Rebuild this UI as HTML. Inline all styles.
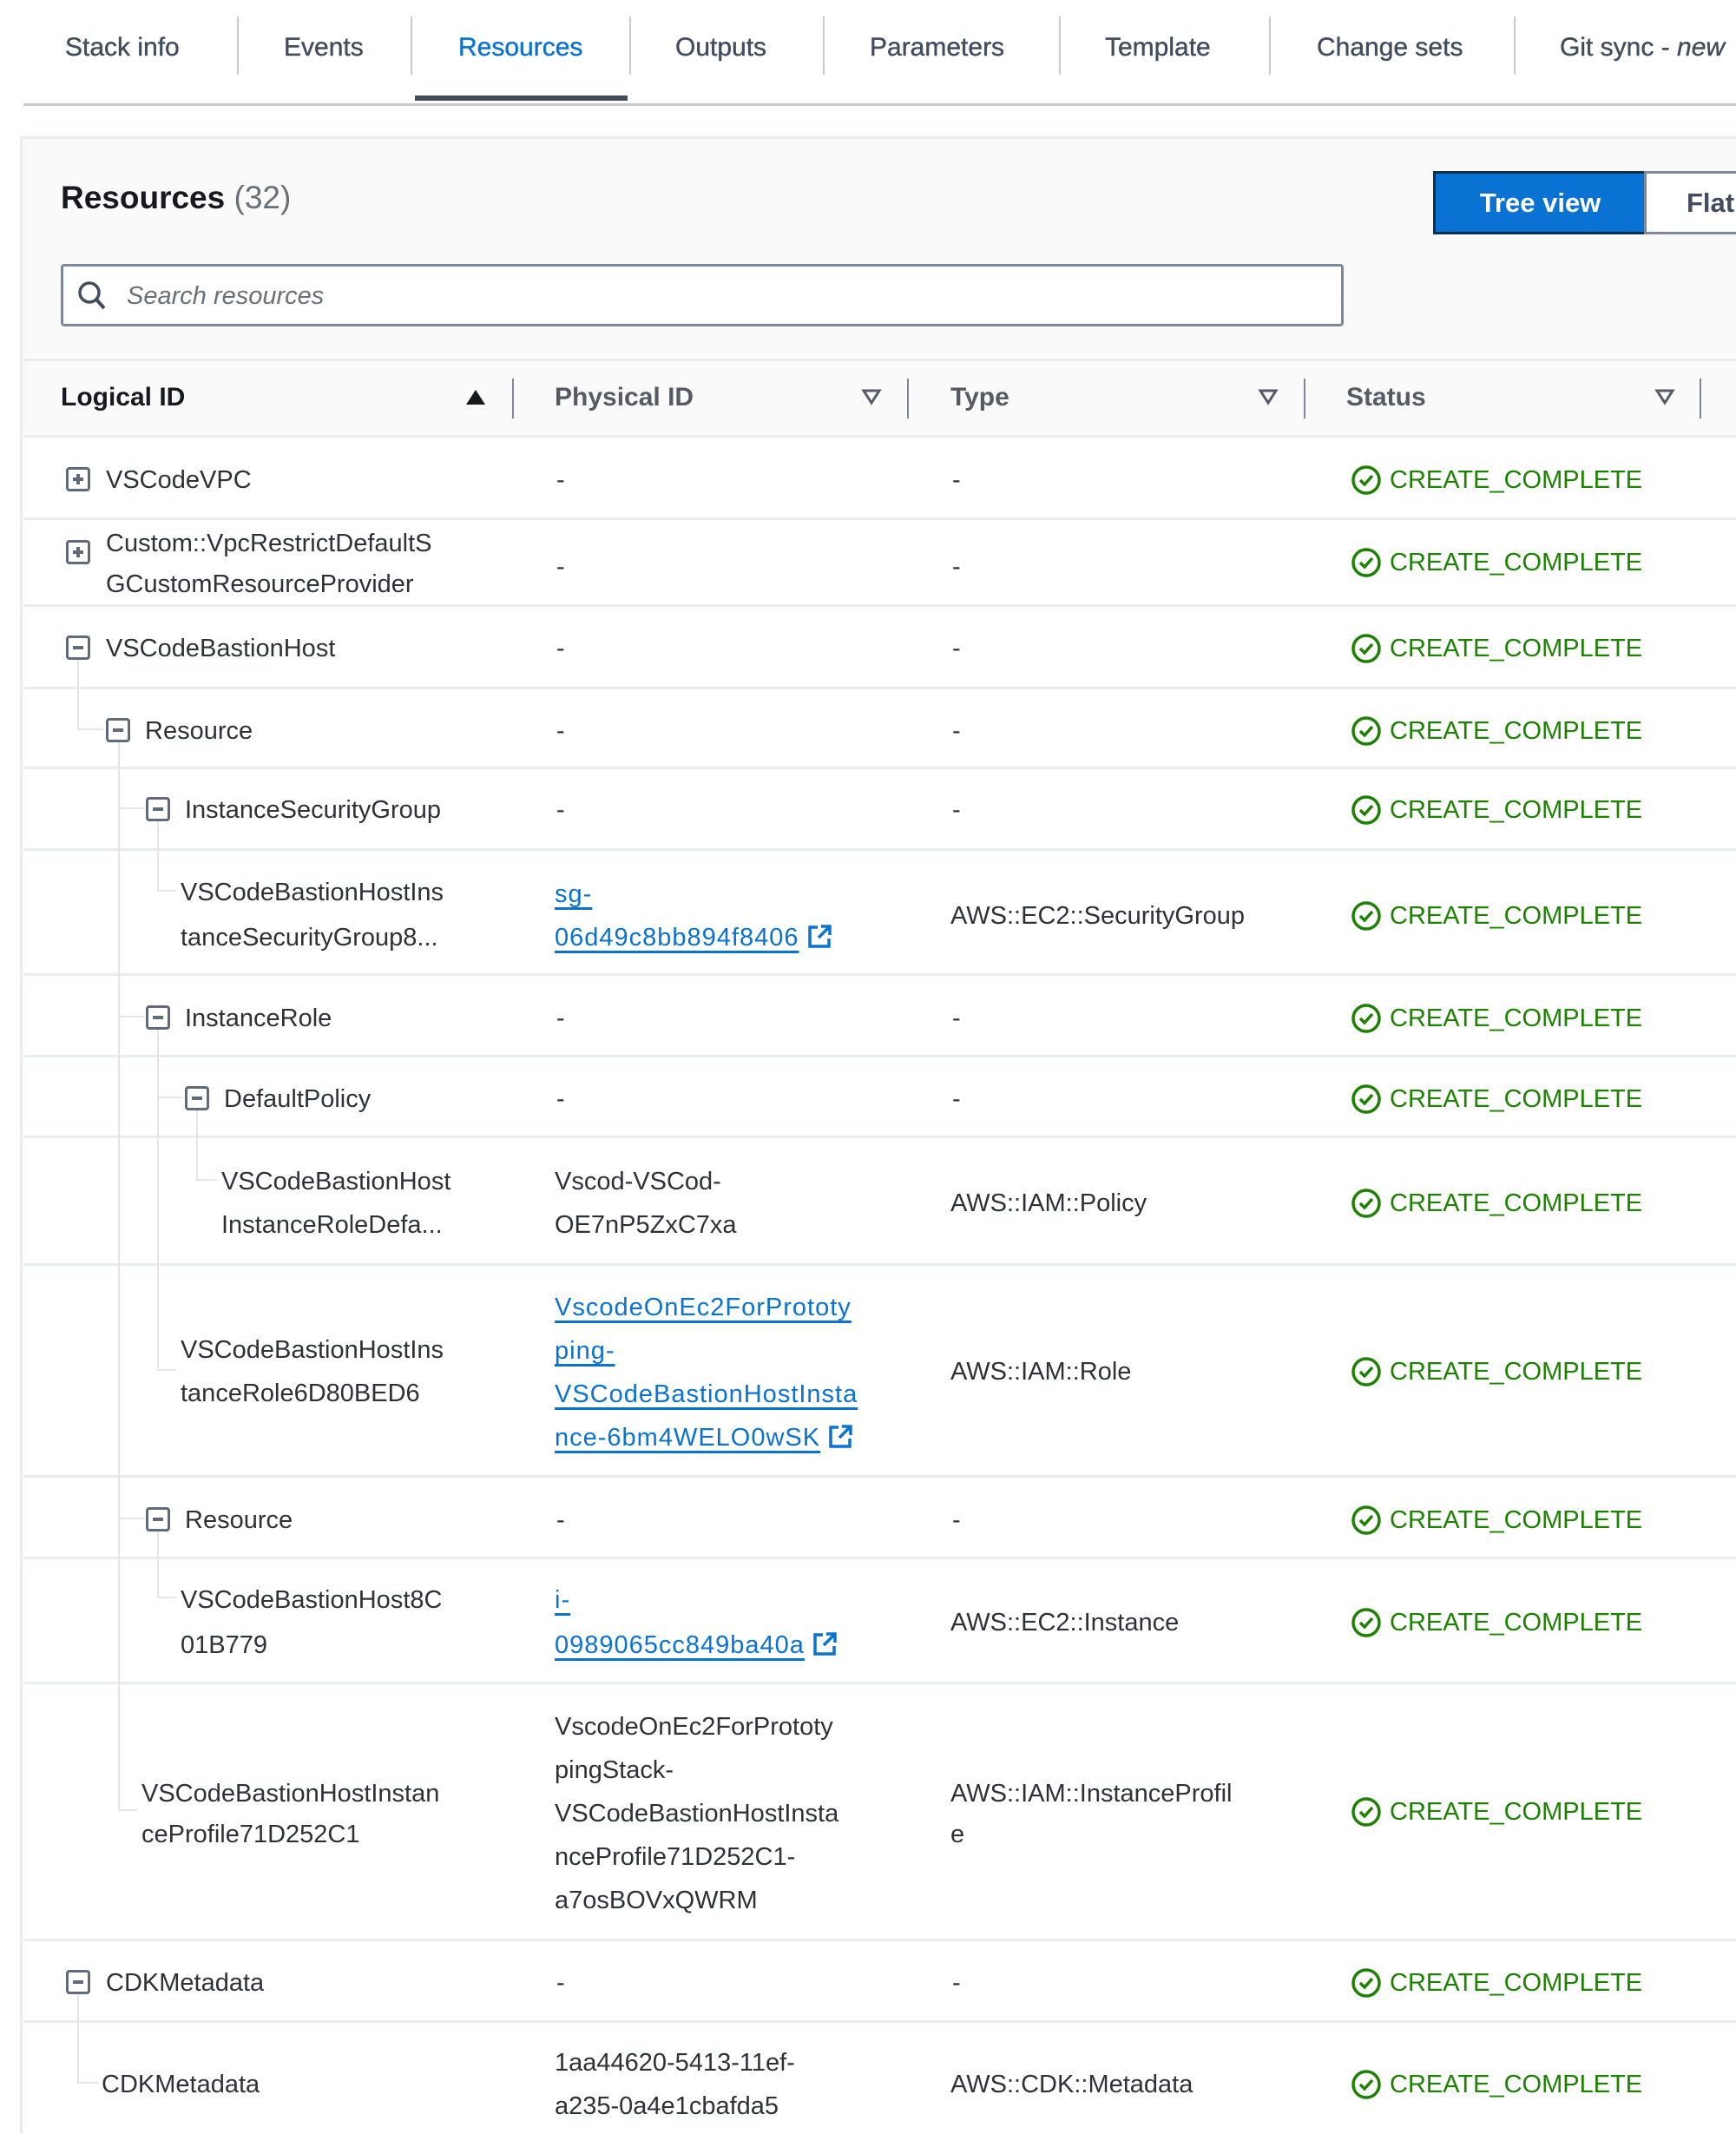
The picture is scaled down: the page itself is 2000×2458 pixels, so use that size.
<!DOCTYPE html>
<html><head><meta charset="utf-8"><style>
*{margin:0;padding:0;box-sizing:border-box}
body{width:2000px;height:2458px;overflow:hidden;background:#fff;font-family:"Liberation Sans",sans-serif;position:relative;color:#2a2e33}
.a{position:absolute}
.t{position:absolute;font-size:29px;line-height:50px;white-space:nowrap;color:#2d3238;transform:translateY(3px)}
.tab{position:absolute;top:33px;font-size:30px;line-height:44px;color:#414d5c;white-space:nowrap;-webkit-text-stroke:0.4px #414d5c}
.sep{position:absolute;top:19px;width:2px;height:67px;background:#c6cbd1}
.rb{position:absolute;left:27px;width:1973px;height:3px;background:#eaeded}
.ic{position:absolute;width:28px;height:28px;border:3px solid #5f6b7a;border-radius:4px;transform:translateY(2px)}
.ic:before{content:"";position:absolute;left:5px;top:9px;width:12px;height:4px;background:#5f6b7a}
.ic.p:after{content:"";position:absolute;left:9px;top:5px;width:4px;height:12px;background:#5f6b7a}
.st{position:absolute;left:1556px;height:50px;white-space:nowrap;font-size:29px;line-height:50px;color:#1d8102;transform:translateY(3px)}
.st svg{position:absolute;left:0;top:7px}
.st span{position:absolute;left:45px;top:0}
.lk{color:#0972d3;text-decoration:underline;text-decoration-thickness:3px;text-underline-offset:6px;letter-spacing:1px}
.vl{position:absolute;width:2px;background:#e3e6e8}
.hl{position:absolute;height:2px;background:#e3e6e8}
.h{position:absolute;top:433px;font-size:30px;line-height:50px;font-weight:bold;color:#545b64}
.hs{position:absolute;top:436px;width:2px;height:46px;background:#7d8998}
</style></head><body>
<div class="tab" style="left:75px">Stack info</div>
<div class="sep" style="left:273px"></div>
<div class="tab" style="left:327px">Events</div>
<div class="sep" style="left:473px"></div>
<div class="tab" style="left:528px;color:#0972d3;-webkit-text-stroke:0.4px #0972d3">Resources</div>
<div class="sep" style="left:725px"></div>
<div class="tab" style="left:778px">Outputs</div>
<div class="sep" style="left:948px"></div>
<div class="tab" style="left:1002px">Parameters</div>
<div class="sep" style="left:1220px"></div>
<div class="tab" style="left:1273px">Template</div>
<div class="sep" style="left:1462px"></div>
<div class="tab" style="left:1517px">Change sets</div>
<div class="sep" style="left:1744px"></div>
<div class="tab" style="left:1797px">Git sync - <i>new</i></div>
<div class="a" style="left:27px;top:119px;width:1973px;height:3px;background:#c6cbd1"></div>
<div class="a" style="left:478px;top:110px;width:245px;height:6px;background:#414d5c"></div>

<div class="a" style="left:23px;top:157px;width:1977px;height:345px;background:#fafafa;border-top:3px solid #eaeded"></div>
<div class="a" style="left:23px;top:157px;width:3px;height:2301px;background:#eaeded"></div>
<div class="a" style="left:70px;top:204px;font-size:37px;line-height:48px;font-weight:bold;color:#16191f">Resources <span style="font-weight:normal;color:#687078">(32)</span></div>
<div class="a" style="left:1651px;top:197px;width:244px;height:73px;background:#0972d3;border:3px solid #0d2f52;border-right:none;color:#fff;font-weight:bold;font-size:31px;line-height:67px;text-align:center">Tree view</div>
<div class="a" style="left:1894px;top:197px;width:120px;height:73px;background:#fff;border:3px solid #7d8998;color:#414d5c;font-weight:bold;font-size:31px;line-height:67px;padding-left:46px">Flat</div>
<div class="a" style="left:70px;top:304px;width:1478px;height:72px;background:#fff;border:3px solid #7d8998;border-radius:4px"></div>
<svg class="a" style="left:88px;top:322px" width="36" height="40" viewBox="0 0 36 40"><circle cx="15" cy="15" r="11" fill="none" stroke="#414d5c" stroke-width="3.5"/><path d="M23 23 L32 33" stroke="#414d5c" stroke-width="4"/></svg>
<div class="a" style="left:146px;top:316px;font-size:29px;line-height:50px;font-style:italic;color:#687078">Search resources</div>
<div class="a" style="left:27px;top:413px;width:1973px;height:3px;background:#eaeded"></div>

<div class="h" style="left:70px;color:#16191f">Logical ID</div>
<svg class="a" style="left:535px;top:446px" width="26" height="22"><path d="M2 20 L13 3 L24 20Z" fill="#16191f"/></svg>
<div class="hs" style="left:590px"></div>
<div class="h" style="left:639px">Physical ID</div>
<svg class="a" style="left:992px;top:447px" width="24" height="20"><path d="M3 3 L21 3 L12 17Z" fill="none" stroke="#545b64" stroke-width="3"/></svg>
<div class="hs" style="left:1045px"></div>
<div class="h" style="left:1095px">Type</div>
<svg class="a" style="left:1449px;top:447px" width="24" height="20"><path d="M3 3 L21 3 L12 17Z" fill="none" stroke="#545b64" stroke-width="3"/></svg>
<div class="hs" style="left:1502px"></div>
<div class="h" style="left:1551px">Status</div>
<svg class="a" style="left:1906px;top:447px" width="24" height="20"><path d="M3 3 L21 3 L12 17Z" fill="none" stroke="#545b64" stroke-width="3"/></svg>
<div class="hs" style="left:1958px"></div>

<div class="rb" style="top:501px"></div>
<div class="rb" style="top:596px"></div>
<div class="rb" style="top:696px"></div>
<div class="rb" style="top:791px"></div>
<div class="rb" style="top:883px"></div>
<div class="rb" style="top:977px"></div>
<div class="rb" style="top:1121px"></div>
<div class="rb" style="top:1215px"></div>
<div class="rb" style="top:1308px"></div>
<div class="rb" style="top:1455px"></div>
<div class="rb" style="top:1699px"></div>
<div class="rb" style="top:1793px"></div>
<div class="rb" style="top:1937px"></div>
<div class="rb" style="top:2233px"></div>
<div class="rb" style="top:2327px"></div>

<div class="vl" style="left:89px;top:760px;height:80px"></div>
<div class="hl" style="left:89px;top:839px;width:30px"></div>
<div class="vl" style="left:136px;top:855px;height:1230px"></div>
<div class="hl" style="left:136px;top:930px;width:30px"></div>
<div class="hl" style="left:136px;top:1170px;width:30px"></div>
<div class="hl" style="left:136px;top:1748px;width:30px"></div>
<div class="hl" style="left:136px;top:2084px;width:22px"></div>
<div class="vl" style="left:181px;top:946px;height:80px"></div>
<div class="hl" style="left:181px;top:1025px;width:22px"></div>
<div class="vl" style="left:181px;top:1186px;height:392px"></div>
<div class="hl" style="left:181px;top:1263px;width:30px"></div>
<div class="hl" style="left:181px;top:1577px;width:22px"></div>
<div class="vl" style="left:181px;top:1764px;height:76px"></div>
<div class="hl" style="left:181px;top:1839px;width:22px"></div>
<div class="vl" style="left:226px;top:1279px;height:80px"></div>
<div class="hl" style="left:226px;top:1358px;width:24px"></div>
<div class="vl" style="left:89px;top:2297px;height:102px"></div>
<div class="hl" style="left:89px;top:2398px;width:24px"></div>

<div class="ic p" style="left:76px;top:536px"></div>
<div class="t" style="left:122px;top:525px">VSCodeVPC</div>
<div class="t" style="left:641px;top:525px">-</div>
<div class="t" style="left:1097px;top:525px">-</div>
<div class="st" style="top:525px"><svg width="36" height="36"><circle cx="18" cy="18" r="15" fill="none" stroke="#1d8102" stroke-width="3.5"/><path d="M11 18 L16 23 L25 13" fill="none" stroke="#1d8102" stroke-width="3.5"/></svg><span>CREATE_COMPLETE</span></div>

<div class="ic p" style="left:76px;top:620px"></div>
<div class="t" style="left:122px;top:600px;line-height:47px">Custom::VpcRestrictDefaultS<br>GCustomResourceProvider</div>
<div class="t" style="left:641px;top:625px">-</div>
<div class="t" style="left:1097px;top:625px">-</div>
<div class="st" style="top:620px"><svg width="36" height="36"><circle cx="18" cy="18" r="15" fill="none" stroke="#1d8102" stroke-width="3.5"/><path d="M11 18 L16 23 L25 13" fill="none" stroke="#1d8102" stroke-width="3.5"/></svg><span>CREATE_COMPLETE</span></div>

<div class="ic" style="left:76px;top:730px"></div>
<div class="t" style="left:122px;top:719px">VSCodeBastionHost</div>
<div class="t" style="left:641px;top:719px">-</div>
<div class="t" style="left:1097px;top:719px">-</div>
<div class="st" style="top:719px"><svg width="36" height="36"><circle cx="18" cy="18" r="15" fill="none" stroke="#1d8102" stroke-width="3.5"/><path d="M11 18 L16 23 L25 13" fill="none" stroke="#1d8102" stroke-width="3.5"/></svg><span>CREATE_COMPLETE</span></div>

<div class="ic" style="left:122px;top:825px"></div>
<div class="t" style="left:167px;top:814px">Resource</div>
<div class="t" style="left:641px;top:814px">-</div>
<div class="t" style="left:1097px;top:814px">-</div>
<div class="st" style="top:814px"><svg width="36" height="36"><circle cx="18" cy="18" r="15" fill="none" stroke="#1d8102" stroke-width="3.5"/><path d="M11 18 L16 23 L25 13" fill="none" stroke="#1d8102" stroke-width="3.5"/></svg><span>CREATE_COMPLETE</span></div>

<div class="ic" style="left:168px;top:916px"></div>
<div class="t" style="left:213px;top:905px">InstanceSecurityGroup</div>
<div class="t" style="left:641px;top:905px">-</div>
<div class="t" style="left:1097px;top:905px">-</div>
<div class="st" style="top:905px"><svg width="36" height="36"><circle cx="18" cy="18" r="15" fill="none" stroke="#1d8102" stroke-width="3.5"/><path d="M11 18 L16 23 L25 13" fill="none" stroke="#1d8102" stroke-width="3.5"/></svg><span>CREATE_COMPLETE</span></div>

<div class="t" style="left:208px;top:999px;line-height:52px">VSCodeBastionHostIns<br>tanceSecurityGroup8...</div>
<div class="t" style="left:639px;top:1002px;line-height:50px"><span class="lk">sg-</span><br><span class="lk">06d49c8bb894f8406</span> <svg width="30" height="30" style="vertical-align:-5px"><path d="M13 4 H4 V26 H26 V17" fill="none" stroke="#0972d3" stroke-width="3.5"/><path d="M17 3 H27 V13 M27 3 L14 16" fill="none" stroke="#0972d3" stroke-width="3.5"/></svg></div>
<div class="t" style="left:1095px;top:1027px">AWS::EC2::SecurityGroup</div>
<div class="st" style="top:1027px"><svg width="36" height="36"><circle cx="18" cy="18" r="15" fill="none" stroke="#1d8102" stroke-width="3.5"/><path d="M11 18 L16 23 L25 13" fill="none" stroke="#1d8102" stroke-width="3.5"/></svg><span>CREATE_COMPLETE</span></div>

<div class="ic" style="left:168px;top:1156px"></div>
<div class="t" style="left:213px;top:1145px">InstanceRole</div>
<div class="t" style="left:641px;top:1145px">-</div>
<div class="t" style="left:1097px;top:1145px">-</div>
<div class="st" style="top:1145px"><svg width="36" height="36"><circle cx="18" cy="18" r="15" fill="none" stroke="#1d8102" stroke-width="3.5"/><path d="M11 18 L16 23 L25 13" fill="none" stroke="#1d8102" stroke-width="3.5"/></svg><span>CREATE_COMPLETE</span></div>

<div class="ic" style="left:213px;top:1249px"></div>
<div class="t" style="left:258px;top:1238px">DefaultPolicy</div>
<div class="t" style="left:641px;top:1238px">-</div>
<div class="t" style="left:1097px;top:1238px">-</div>
<div class="st" style="top:1238px"><svg width="36" height="36"><circle cx="18" cy="18" r="15" fill="none" stroke="#1d8102" stroke-width="3.5"/><path d="M11 18 L16 23 L25 13" fill="none" stroke="#1d8102" stroke-width="3.5"/></svg><span>CREATE_COMPLETE</span></div>

<div class="t" style="left:255px;top:1333px">VSCodeBastionHost<br>InstanceRoleDefa...</div>
<div class="t" style="left:639px;top:1333px">Vscod-VSCod-<br>OE7nP5ZxC7xa</div>
<div class="t" style="left:1095px;top:1358px">AWS::IAM::Policy</div>
<div class="st" style="top:1358px"><svg width="36" height="36"><circle cx="18" cy="18" r="15" fill="none" stroke="#1d8102" stroke-width="3.5"/><path d="M11 18 L16 23 L25 13" fill="none" stroke="#1d8102" stroke-width="3.5"/></svg><span>CREATE_COMPLETE</span></div>

<div class="t" style="left:208px;top:1527px">VSCodeBastionHostIns<br>tanceRole6D80BED6</div>
<div class="t" style="left:639px;top:1478px"><span class="lk">VscodeOnEc2ForPrototy</span><br><span class="lk">ping-</span><br><span class="lk">VSCodeBastionHostInsta</span><br><span class="lk">nce-6bm4WELO0wSK</span> <svg width="30" height="30" style="vertical-align:-5px"><path d="M13 4 H4 V26 H26 V17" fill="none" stroke="#0972d3" stroke-width="3.5"/><path d="M17 3 H27 V13 M27 3 L14 16" fill="none" stroke="#0972d3" stroke-width="3.5"/></svg></div>
<div class="t" style="left:1095px;top:1552px">AWS::IAM::Role</div>
<div class="st" style="top:1552px"><svg width="36" height="36"><circle cx="18" cy="18" r="15" fill="none" stroke="#1d8102" stroke-width="3.5"/><path d="M11 18 L16 23 L25 13" fill="none" stroke="#1d8102" stroke-width="3.5"/></svg><span>CREATE_COMPLETE</span></div>

<div class="ic" style="left:168px;top:1734px"></div>
<div class="t" style="left:213px;top:1723px">Resource</div>
<div class="t" style="left:641px;top:1723px">-</div>
<div class="t" style="left:1097px;top:1723px">-</div>
<div class="st" style="top:1723px"><svg width="36" height="36"><circle cx="18" cy="18" r="15" fill="none" stroke="#1d8102" stroke-width="3.5"/><path d="M11 18 L16 23 L25 13" fill="none" stroke="#1d8102" stroke-width="3.5"/></svg><span>CREATE_COMPLETE</span></div>

<div class="t" style="left:208px;top:1814px;line-height:52px">VSCodeBastionHost8C<br>01B779</div>
<div class="t" style="left:639px;top:1814px;line-height:52px"><span class="lk">i-</span><br><span class="lk">0989065cc849ba40a</span> <svg width="30" height="30" style="vertical-align:-5px"><path d="M13 4 H4 V26 H26 V17" fill="none" stroke="#0972d3" stroke-width="3.5"/><path d="M17 3 H27 V13 M27 3 L14 16" fill="none" stroke="#0972d3" stroke-width="3.5"/></svg></div>
<div class="t" style="left:1095px;top:1841px">AWS::EC2::Instance</div>
<div class="st" style="top:1841px"><svg width="36" height="36"><circle cx="18" cy="18" r="15" fill="none" stroke="#1d8102" stroke-width="3.5"/><path d="M11 18 L16 23 L25 13" fill="none" stroke="#1d8102" stroke-width="3.5"/></svg><span>CREATE_COMPLETE</span></div>

<div class="t" style="left:163px;top:2040px;line-height:47px">VSCodeBastionHostInstan<br>ceProfile71D252C1</div>
<div class="t" style="left:639px;top:1961px">VscodeOnEc2ForPrototy<br>pingStack-<br>VSCodeBastionHostInsta<br>nceProfile71D252C1-<br>a7osBOVxQWRM</div>
<div class="t" style="left:1095px;top:2040px;line-height:47px">AWS::IAM::InstanceProfil<br>e</div>
<div class="st" style="top:2059px"><svg width="36" height="36"><circle cx="18" cy="18" r="15" fill="none" stroke="#1d8102" stroke-width="3.5"/><path d="M11 18 L16 23 L25 13" fill="none" stroke="#1d8102" stroke-width="3.5"/></svg><span>CREATE_COMPLETE</span></div>

<div class="ic" style="left:76px;top:2267px"></div>
<div class="t" style="left:122px;top:2256px">CDKMetadata</div>
<div class="t" style="left:641px;top:2256px">-</div>
<div class="t" style="left:1097px;top:2256px">-</div>
<div class="st" style="top:2256px"><svg width="36" height="36"><circle cx="18" cy="18" r="15" fill="none" stroke="#1d8102" stroke-width="3.5"/><path d="M11 18 L16 23 L25 13" fill="none" stroke="#1d8102" stroke-width="3.5"/></svg><span>CREATE_COMPLETE</span></div>

<div class="t" style="left:117px;top:2373px">CDKMetadata</div>
<div class="t" style="left:639px;top:2348px">1aa44620-5413-11ef-<br>a235-0a4e1cbafda5</div>
<div class="t" style="left:1095px;top:2373px">AWS::CDK::Metadata</div>
<div class="st" style="top:2373px"><svg width="36" height="36"><circle cx="18" cy="18" r="15" fill="none" stroke="#1d8102" stroke-width="3.5"/><path d="M11 18 L16 23 L25 13" fill="none" stroke="#1d8102" stroke-width="3.5"/></svg><span>CREATE_COMPLETE</span></div>
</body></html>
